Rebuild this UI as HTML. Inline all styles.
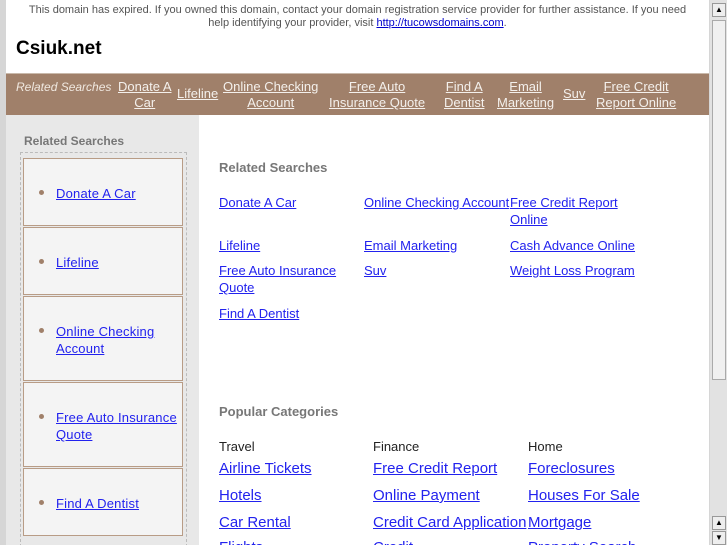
<!DOCTYPE html>
<html style="width:727px;height:545px;overflow:hidden"><head><meta charset="utf-8"><style>
*{margin:0;padding:0;box-sizing:border-box}
body{width:727px;height:545px;overflow:hidden;background:#d6d6d6;font-family:"Liberation Sans",sans-serif;position:relative}
a{color:#2222ee;text-decoration:underline}
.abs{position:absolute}
#page{position:absolute;left:6px;top:0;width:703px;height:545px;background:#fff;overflow:hidden}
#top{position:absolute;left:0;top:4px;width:703px;text-align:center;font-size:11px;color:#555;line-height:13px}
#top a{color:#0000cc}
#title{position:absolute;left:10px;top:38px;font-size:19px;font-weight:bold;color:#000}
#bar{position:absolute;left:0;top:73px;width:703px;height:42px;background:#a0806a;border-top:1px solid #c9b9ab}
#bar .i{position:absolute;font-size:13px;line-height:16px;color:#fff;text-align:center}
#bar .i a{color:#f4f0ec}
#side{position:absolute;left:0;top:115px;width:193px;height:430px;background:#e8e8e8;overflow:hidden}
#main{position:absolute;left:193px;top:115px;width:510px;height:430px;background:#fff;overflow:hidden}
.box{position:absolute;left:17px;width:160px;background:#f4f4f4;border:1px solid #b89c86;font-size:13px}
.box span{position:absolute;left:15px;top:31px;width:5px;height:5px;border-radius:50%;background:#a0806a}
.box a{position:absolute;left:32px;line-height:17px;letter-spacing:.2px}
h3{font-size:12px;color:#777;font-weight:bold;position:absolute}
.l{position:absolute;font-size:13px;line-height:17px}
.p{position:absolute;font-size:15px}
.c{position:absolute;font-size:13px;color:#222}
#sb{position:absolute;left:710px;top:0;width:17px;height:545px;background:#e2e2e2}
</style></head><body>
<div id="page">
<div id="top">This domain has expired. If you owned this domain, contact your domain registration service provider for further assistance. If you need<br>help identifying your provider, visit <a>http://tucowsdomains.com</a>.</div>
<div id="title">Csiuk.net</div>
<div id="bar">
<div class="i" style="left:10px;top:5px;font-style:italic;color:#f0e8e0;font-size:12px">Related Searches</div>
<div class="i" style="left:112px;top:5px"><a>Donate A<br>Car</a></div>
<div class="i" style="left:171px;top:12px"><a>Lifeline</a></div>
<div class="i" style="left:217px;top:5px"><a>Online Checking<br>Account</a></div>
<div class="i" style="left:323px;top:5px"><a>Free Auto<br>Insurance Quote</a></div>
<div class="i" style="left:438px;top:5px"><a>Find A<br>Dentist</a></div>
<div class="i" style="left:491px;top:5px"><a>Email<br>Marketing</a></div>
<div class="i" style="left:557px;top:12px"><a>Suv</a></div>
<div class="i" style="left:590px;top:5px"><a>Free Credit<br>Report Online</a></div>
</div>
<div id="side">
<h3 style="left:18px;top:19px">Related Searches</h3>
<div class="abs" style="left:14px;top:37px;width:167px;height:400px;border:1px dashed #bbb"></div>
<div class="box" style="top:43px;height:68px"><span></span><a style="top:26px">Donate A Car</a></div>
<div class="box" style="top:112px;height:68px"><span></span><a style="top:26px">Lifeline</a></div>
<div class="box" style="top:181px;height:85px"><span></span><a style="top:26px">Online Checking<br>Account</a></div>
<div class="box" style="top:267px;height:85px"><span></span><a style="top:26px">Free Auto Insurance<br>Quote</a></div>
<div class="box" style="top:353px;height:68px"><span></span><a style="top:26px">Find A Dentist</a></div>
</div>
<div id="main">
<h3 style="left:20px;top:45px;font-size:13px">Related Searches</h3>
<a class="l" style="left:20px;top:79px">Donate A Car</a>
<a class="l" style="left:165px;top:79px">Online Checking Account</a>
<a class="l" style="left:311px;top:79px">Free Credit Report<br>Online</a>
<a class="l" style="left:20px;top:122px">Lifeline</a>
<a class="l" style="left:165px;top:122px">Email Marketing</a>
<a class="l" style="left:311px;top:122px">Cash Advance Online</a>
<a class="l" style="left:20px;top:147px">Free Auto Insurance<br>Quote</a>
<a class="l" style="left:165px;top:147px">Suv</a>
<a class="l" style="left:311px;top:147px">Weight Loss Program</a>
<a class="l" style="left:20px;top:190px">Find A Dentist</a>
<h3 style="left:20px;top:289px;font-size:13px">Popular Categories</h3>
<div class="c" style="left:20px;top:324px">Travel</div>
<div class="c" style="left:174px;top:324px">Finance</div>
<div class="c" style="left:329px;top:324px">Home</div>
<a class="p" style="left:20px;top:345px">Airline Tickets</a>
<a class="p" style="left:174px;top:345px">Free Credit Report</a>
<a class="p" style="left:329px;top:345px">Foreclosures</a>
<a class="p" style="left:20px;top:372px">Hotels</a>
<a class="p" style="left:174px;top:372px">Online Payment</a>
<a class="p" style="left:329px;top:372px">Houses For Sale</a>
<a class="p" style="left:20px;top:399px">Car Rental</a>
<a class="p" style="left:174px;top:399px">Credit Card Application</a>
<a class="p" style="left:329px;top:399px">Mortgage</a>
<a class="p" style="left:20px;top:424px">Flights</a>
<a class="p" style="left:174px;top:424px">Credit</a>
<a class="p" style="left:329px;top:424px">Property Search</a>
</div>
</div>
<div id="sb">
<div class="abs" style="left:2px;top:3px;width:14px;height:14px;background:#eee;border:1px solid #999;font-size:8px;text-align:center;line-height:12px">▲</div>
<div class="abs" style="left:2px;top:20px;width:14px;height:360px;background:#f0f0f0;border:1px solid #aaa"></div>
<div class="abs" style="left:2px;top:516px;width:14px;height:14px;background:#eee;border:1px solid #999;font-size:8px;text-align:center;line-height:12px">▲</div>
<div class="abs" style="left:2px;top:531px;width:14px;height:14px;background:#eee;border:1px solid #999;font-size:8px;text-align:center;line-height:12px">▼</div>
</div>
</body></html>
